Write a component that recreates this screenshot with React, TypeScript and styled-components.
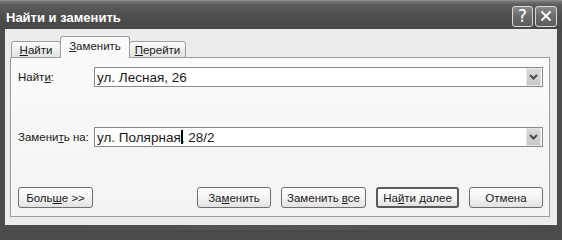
import styled, { createGlobalStyle } from "styled-components";

const GlobalStyle = createGlobalStyle`
  html, body {
    margin: 0;
    padding: 0;
    background: #4a4a4a;
  }
  * {
    box-sizing: border-box;
  }
`;

const Window = styled.div`
  width: 562px;
  height: 230px;
  display: flex;
  flex-direction: column;
  background: linear-gradient(90deg, #4c4c4c, #555555 50%, #4a4a4a);
  font-family: "Liberation Sans", Arial, sans-serif;
  font-size: 11px;
  color: #1a1a1a;
  overflow: hidden;
`;

const TitleBar = styled.div`
  height: 29px;
  flex: none;
  display: flex;
  align-items: center;
  padding: 0 5px 0 6px;
  background: linear-gradient(180deg, #7a7a7a 0%, #5e5e5e 12%, #4f4f4f 50%, #474747 100%);
  border-top: 1px solid #8a8a8a;
`;

const Title = styled.div`
  flex: 1;
  color: #ffffff;
  font-weight: bold;
  font-size: 13px;
  padding-top: 4px;
`;

const CaptionButtons = styled.div`
  display: flex;
  gap: 2px;
  margin-top: 2px;
`;

const CaptionButton = styled.div<{ $w: number }>`
  width: ${(p) => p.$w}px;
  height: 21px;
  border: 1px solid #d8d8d8;
  border-radius: 3px;
  background: linear-gradient(180deg, #8a8a8a, #6a6a6a 50%, #5c5c5c);
  display: flex;
  align-items: center;
  justify-content: center;
  color: #ffffff;
  font-size: 17px;
  font-family: "DejaVu Sans", sans-serif;
`;

const Body = styled.div`
  flex: 1;
  margin: 0 5px 5px 5px;
  background: #ececec;
  padding: 7px 7px 8px 5px;
  display: flex;
  flex-direction: column;
`;

const Tabs = styled.div`
  display: flex;
  align-items: flex-end;
  height: 22px;
  padding-left: 1px;
  position: relative;
  z-index: 1;
  margin-bottom: -1px;
`;

const Tab = styled.div<{ $w: number; $active?: boolean }>`
  width: ${(p) => p.$w}px;
  height: ${(p) => (p.$active ? 22 : 17)}px;
  border: 1px solid #9c9c9c;
  border-bottom: ${(p) => (p.$active ? "none" : "1px solid #9c9c9c")};
  border-radius: 3px 3px 0 0;
  background: ${(p) =>
    p.$active
      ? "#fafafa"
      : "linear-gradient(180deg, #fdfdfd, #ececec 60%, #e2e2e2)"};
  display: flex;
  align-items: center;
  justify-content: center;
  padding-bottom: ${(p) => (p.$active ? 3 : 0)}px;
  margin-left: ${(p) => (p.$active ? -1 : 0)}px;
  margin-right: ${(p) => (p.$active ? -1 : 0)}px;
  position: relative;
  z-index: ${(p) => (p.$active ? 2 : 1)};
  font-size: 11.5px;
`;

const Panel = styled.div`
  border: 1px solid #9c9c9c;
  background: linear-gradient(180deg, #fafafa, #f3f3f3);
  padding: 9px 6px 8px 6px;
  display: flex;
  flex-direction: column;
`;

const FieldRow = styled.div<{ $gap?: number }>`
  display: flex;
  align-items: center;
  margin-top: ${(p) => p.$gap ?? 0}px;
`;

const Label = styled.div`
  width: 77px;
  padding-left: 1px;
  font-size: 11.5px;
`;

const Combo = styled.div`
  flex: 1;
  height: 20px;
  border: 1px solid #8a8a8a;
  background: #ffffff;
  display: flex;
  align-items: center;
  padding: 0 1px 0 2px;
  font-size: 13.5px;
`;

const ComboText = styled.div`
  flex: 1;
  display: flex;
  align-items: center;
  white-space: pre;
`;

const Caret = styled.span`
  display: inline-block;
  width: 2px;
  height: 14px;
  background: #000;
  margin-right: -2px;
`;

const DropButton = styled.div`
  width: 15px;
  height: 18px;
  background: linear-gradient(180deg, #dadada, #c8c8c8);
  border: 1px solid #e6e6e6;
  display: flex;
  align-items: center;
  justify-content: center;
`;

const ButtonRow = styled.div`
  display: flex;
  justify-content: space-between;
  margin-top: 40px;
  padding-left: 1px;
`;

const ButtonGroup = styled.div`
  display: flex;
  gap: 10px;
`;

const Button = styled.div<{ $w: number; $default?: boolean }>`
  width: ${(p) => p.$w}px;
  height: 21px;
  border: ${(p) => (p.$default ? "2px solid #5a5a5a" : "1px solid #6e6e6e")};
  border-radius: 3px;
  background: linear-gradient(180deg, #ffffff, #f1f1f1 60%, #e2e2e2);
  display: flex;
  align-items: center;
  justify-content: center;
  font-size: 11.5px;
`;

const U = styled.span`
  text-decoration: underline;
  text-underline-offset: 1px;
`;

function Chevron() {
  return (
    <svg width="9" height="6" viewBox="0 0 9 6">
      <path d="M1 1 L4.5 4.5 L8 1" stroke="#4a4a4a" strokeWidth="2" fill="none" />
    </svg>
  );
}

function CloseIcon() {
  return (
    <svg width="12" height="12" viewBox="0 0 12 12">
      <path d="M1.5 1.5 L10.5 10.5 M10.5 1.5 L1.5 10.5" stroke="#fff" strokeWidth="2" />
    </svg>
  );
}

export default function App() {
  return (
    <>
      <GlobalStyle />
      <Window>
        <TitleBar>
          <Title>Найти и заменить</Title>
          <CaptionButtons>
            <CaptionButton $w={21}>?</CaptionButton>
            <CaptionButton $w={22}>
              <CloseIcon />
            </CaptionButton>
          </CaptionButtons>
        </TitleBar>
        <Body>
          <Tabs>
            <Tab $w={50}>
              <span>
                <U>Н</U>айти
              </span>
            </Tab>
            <Tab $w={70} $active>
              <span>
                <U>З</U>аменить
              </span>
            </Tab>
            <Tab $w={57}>
              <span>
                <U>П</U>ерейти
              </span>
            </Tab>
          </Tabs>
          <Panel>
            <FieldRow>
              <Label>
                Найт<U>и</U>:
              </Label>
              <Combo>
                <ComboText>ул. Лесная, 26</ComboText>
                <DropButton>
                  <Chevron />
                </DropButton>
              </Combo>
            </FieldRow>
            <FieldRow $gap={40}>
              <Label>
                Замени<U>т</U>ь на:
              </Label>
              <Combo>
                <ComboText>
                  ул. Полярная
                  <Caret />, 28/2
                </ComboText>
                <DropButton>
                  <Chevron />
                </DropButton>
              </Combo>
            </FieldRow>
            <ButtonRow>
              <Button $w={75}>
                <span>
                  Боль<U>ш</U>е &gt;&gt;
                </span>
              </Button>
              <ButtonGroup>
                <Button $w={74}>
                  <span>
                    За<U>м</U>енить
                  </span>
                </Button>
                <Button $w={85}>
                  <span>
                    Заменить <U>в</U>се
                  </span>
                </Button>
                <Button $w={83} $default>
                  <span>
                    На<U>й</U>ти далее
                  </span>
                </Button>
                <Button $w={74}>Отмена</Button>
              </ButtonGroup>
            </ButtonRow>
          </Panel>
        </Body>
      </Window>
    </>
  );
}
